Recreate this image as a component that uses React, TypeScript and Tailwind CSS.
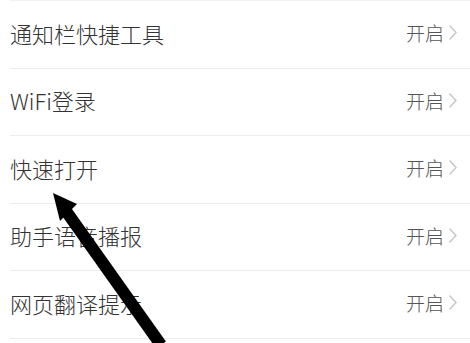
import React from "react";

const items = ["通知栏快捷工具", "WiFi登录", "快速打开", "助手语音播报", "网页翻译提示"];

export default function App() {
  return (
    <div
      className="relative h-[343px] w-[470px] overflow-hidden bg-white"
      style={{ fontFamily: '"Noto Sans CJK SC", "Noto Sans", sans-serif' }}
    >
      <div className="ml-[10px] border-t border-[#f0f0f0]">
        {items.map((label) => (
          <div
            key={label}
            className="flex h-[67.5px] items-center justify-between border-b border-[#ececec] pr-[12px]"
          >
            <span className="-mt-[3px] text-[22px] font-light leading-none text-[#333333]">{label}</span>
            <span className="-mt-[3px] flex items-center gap-[4px]">
              <span className="text-[19px] font-light leading-none text-[#555555]">开启</span>
              <svg width="10" height="17" viewBox="0 0 10 17" fill="none">
                <path d="M1.5 1.5 L8 8.5 L1.5 15.5" stroke="#c4c4c4" strokeWidth="1.3" />
              </svg>
            </span>
          </div>
        ))}
      </div>
      <svg
        className="pointer-events-none absolute left-0 top-0"
        width="470"
        height="343"
        viewBox="0 0 470 343"
      >
        <line x1="66" y1="211" x2="161" y2="345" stroke="#000" strokeWidth="12" />
        <polygon points="53,193 77,204 60,221" fill="#000" />
      </svg>
    </div>
  );
}
